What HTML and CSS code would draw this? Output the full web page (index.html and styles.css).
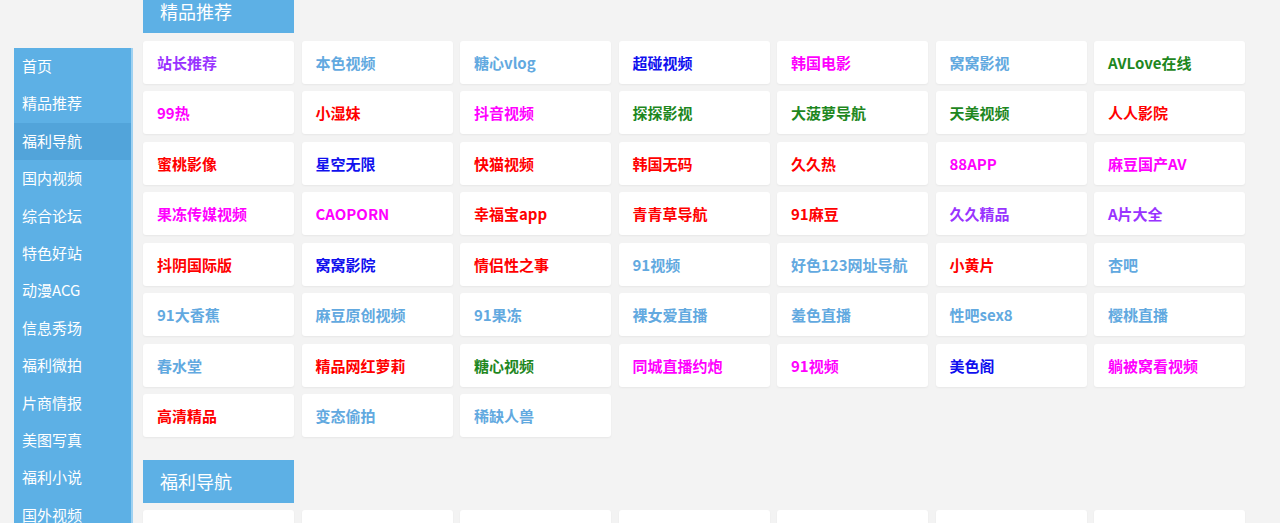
FILE: index.html
```html
<!doctype html>
<html lang="zh-CN">
<head>
    <meta charset="UTF-8">
    <title>导航</title>
    <link rel="stylesheet" href="styles.css">
</head>
<body>
<div class="page">
    <!--左侧菜单-->
    <ul class="side-nav">
        <li><a href="#">首页</a></li>
        <li><a href="#">精品推荐</a></li>
        <li class="active"><a href="#">福利导航</a></li>
        <li><a href="#">国内视频</a></li>
        <li><a href="#">综合论坛</a></li>
        <li><a href="#">特色好站</a></li>
        <li><a href="#">动漫ACG</a></li>
        <li><a href="#">信息秀场</a></li>
        <li><a href="#">福利微拍</a></li>
        <li><a href="#">片商情报</a></li>
        <li><a href="#">美图写真</a></li>
        <li><a href="#">福利小说</a></li>
        <li><a href="#">国外视频</a></li>
    </ul>

    <div class="main">
        <div class="section">
            <h2 class="section-title">精品推荐</h2>
            <div class="site-grid">
                <a class="site c-purple" href="#">站长推荐</a>
                <a class="site c-light" href="#">本色视频</a>
                <a class="site c-light" href="#">糖心vlog</a>
                <a class="site c-blue" href="#">超碰视频</a>
                <a class="site c-pink" href="#">韩国电影</a>
                <a class="site c-light" href="#">窝窝影视</a>
                <a class="site c-green" href="#">AVLove在线</a>

                <a class="site c-pink" href="#">99热</a>
                <a class="site c-red" href="#">小湿妹</a>
                <a class="site c-pink" href="#">抖音视频</a>
                <a class="site c-green" href="#">探探影视</a>
                <a class="site c-green" href="#">大菠萝导航</a>
                <a class="site c-green" href="#">天美视频</a>
                <a class="site c-red" href="#">人人影院</a>

                <a class="site c-red" href="#">蜜桃影像</a>
                <a class="site c-blue" href="#">星空无限</a>
                <a class="site c-red" href="#">快猫视频</a>
                <a class="site c-red" href="#">韩国无码</a>
                <a class="site c-red" href="#">久久热</a>
                <a class="site c-pink" href="#">88APP</a>
                <a class="site c-pink" href="#">麻豆国产AV</a>

                <a class="site c-pink" href="#">果冻传媒视频</a>
                <a class="site c-pink" href="#">CAOPORN</a>
                <a class="site c-red" href="#">幸福宝app</a>
                <a class="site c-red" href="#">青青草导航</a>
                <a class="site c-red" href="#">91麻豆</a>
                <a class="site c-purple" href="#">久久精品</a>
                <a class="site c-purple" href="#">A片大全</a>

                <a class="site c-red" href="#">抖阴国际版</a>
                <a class="site c-blue" href="#">窝窝影院</a>
                <a class="site c-red" href="#">情侣性之事</a>
                <a class="site c-light" href="#">91视频</a>
                <a class="site c-light" href="#">好色123网址导航</a>
                <a class="site c-red" href="#">小黄片</a>
                <a class="site c-light" href="#">杏吧</a>

                <a class="site c-light" href="#">91大香蕉</a>
                <a class="site c-light" href="#">麻豆原创视频</a>
                <a class="site c-light" href="#">91果冻</a>
                <a class="site c-light" href="#">裸女爱直播</a>
                <a class="site c-light" href="#">羞色直播</a>
                <a class="site c-light" href="#">性吧sex8</a>
                <a class="site c-light" href="#">樱桃直播</a>

                <a class="site c-light" href="#">春水堂</a>
                <a class="site c-red" href="#">精品网红萝莉</a>
                <a class="site c-green" href="#">糖心视频</a>
                <a class="site c-pink" href="#">同城直播约炮</a>
                <a class="site c-pink" href="#">91视频</a>
                <a class="site c-blue" href="#">美色阁</a>
                <a class="site c-pink" href="#">躺被窝看视频</a>

                <a class="site c-red" href="#">高清精品</a>
                <a class="site c-light" href="#">变态偷拍</a>
                <a class="site c-light" href="#">稀缺人兽</a>
            </div>
        </div>

        <div class="section">
            <h2 class="section-title">福利导航</h2>
            <div class="site-grid">
                <a class="site c-red" href="#">&nbsp;</a>
                <a class="site c-red" href="#">&nbsp;</a>
                <a class="site c-red" href="#">&nbsp;</a>
                <a class="site c-red" href="#">&nbsp;</a>
                <a class="site c-red" href="#">&nbsp;</a>
                <a class="site c-red" href="#">&nbsp;</a>
                <a class="site c-red" href="#">&nbsp;</a>
            </div>
        </div>
    </div>
</div>
</body>
</html>
```

FILE: styles.css
```css
html, body {
    margin: 0;
    padding: 0;
    background: #f3f3f3;
    font-family: "Noto Sans CJK SC", "Noto Sans", sans-serif;
    overflow: hidden;
}

.page {
    display: flex;
    align-items: flex-start;
}

/*左侧菜单*/
.side-nav {
    list-style: none;
    margin: 48px 0 0 14px;
    padding: 0;
    width: 117px;
    background: #5db0e5;
    border-right: 2px solid #9fd2f2;
    flex-shrink: 0;
}

.side-nav li a {
    display: block;
    height: 37.4px;
    line-height: 36px;
    padding-left: 8px;
    color: #fff;
    font-size: 15px;
    text-decoration: none;
}

.side-nav li.active a {
    background: #52a4da;
}

.main {
    width: 1102px;
    margin-left: 10px;
    margin-top: -10px;
}

.section {
    margin-bottom: 22.5px;
}

.section-title {
    width: 151px;
    height: 43px;
    line-height: 43px;
    margin: 0 0 7.5px 0;
    padding: 0 0 0 17px;
    box-sizing: border-box;
    background: #5db0e5;
    color: #fff;
    font-size: 18px;
    font-weight: normal;
}

.site-grid {
    display: grid;
    grid-template-columns: repeat(7, 151px);
    gap: 7.5px;
}

.site {
    display: block;
    height: 43px;
    box-sizing: border-box;
    padding: 1px 0 0 14px;
    line-height: 42px;
    background: #fff;
    border-radius: 3px;
    box-shadow: 0 1px 2px rgba(0, 0, 0, 0.05);
    font-size: 15px;
    font-weight: bold;
    text-decoration: none;
    white-space: nowrap;
    overflow: hidden;
}

.c-purple { color: #9933ff; }
.c-light { color: #62a9e0; }
.c-blue { color: #1010ee; }
.c-pink { color: #ff00ff; }
.c-green { color: #1e871e; }
.c-red { color: #ff0000; }
```
